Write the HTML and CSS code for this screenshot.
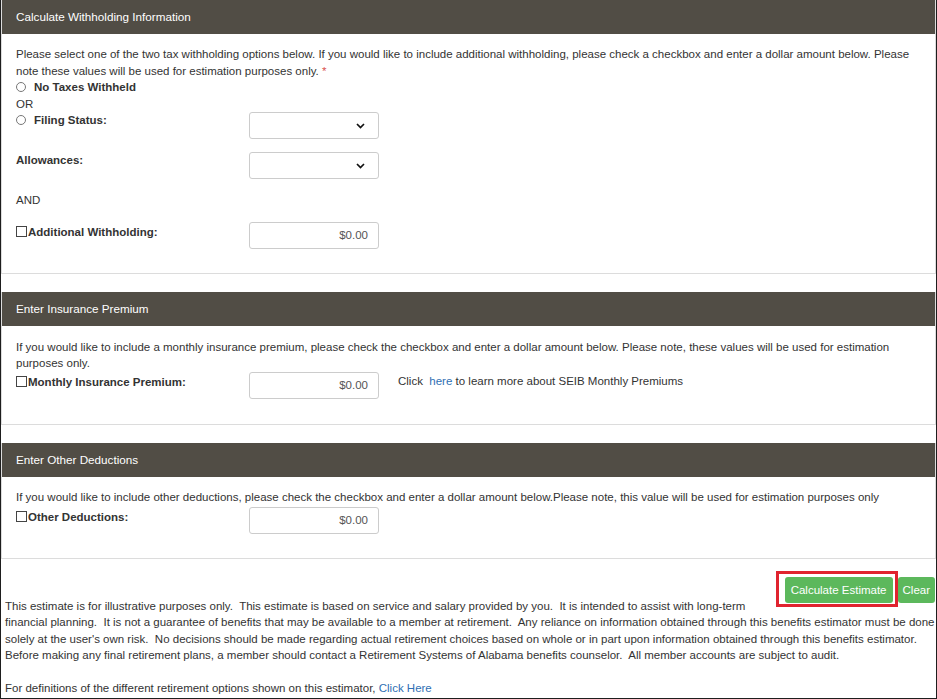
FILE: index.html
```html
<!DOCTYPE html>
<html lang="en">
<head>
    <meta charset="UTF-8">
    <meta name="viewport" content="width=device-width, initial-scale=1.0">
    <title>Benefits Estimator</title>
    <link rel="stylesheet" href="styles.css">
</head>
<body>
    <div class="frame">
        <div class="panel">
            <div class="panel-heading">Calculate Withholding Information</div>
            <div class="panel-body">
                <p class="intro">Please select one of the two tax withholding options below. If you would like to include additional withholding, please check a checkbox and enter a dollar amount below. Please note these values will be used for estimation purposes only. <span class="req">*</span></p>
                <div class="opt"><span class="radio"></span><b>No Taxes Withheld</b></div>
                <div class="plain">OR</div>
                <div class="row">
                    <div class="lbl"><span class="radio"></span><b>Filing Status:</b></div>
                    <div class="field select">
                        <svg width="9" height="6" viewBox="0 0 9 6"><polyline points="1,1 4.5,4.5 8,1" fill="none" stroke="#111" stroke-width="1.7"/></svg>
                    </div>
                </div>
                <div class="row gap">
                    <div class="lbl"><b>Allowances:</b></div>
                    <div class="field select">
                        <svg width="9" height="6" viewBox="0 0 9 6"><polyline points="1,1 4.5,4.5 8,1" fill="none" stroke="#111" stroke-width="1.7"/></svg>
                    </div>
                </div>
                <div class="plain gap">AND</div>
                <div class="row gap">
                    <div class="lbl pad"><span class="check"></span><b>Additional Withholding:</b></div>
                    <div class="field money">$0.00</div>
                </div>
            </div>
        </div>

        <div class="panel">
            <div class="panel-heading">Enter Insurance Premium</div>
            <div class="panel-body b2">
                <p>If you would like to include a monthly insurance premium, please check the checkbox and enter a dollar amount below. Please note, these values will be used for estimation purposes only.</p>
                <div class="row">
                    <div class="lbl pad"><span class="check"></span><b>Monthly Insurance Premium:</b></div>
                    <div class="field money">$0.00</div>
                    <div class="more">Click &nbsp;<a href="#">here</a> to learn more about SEIB Monthly Premiums</div>
                </div>
            </div>
        </div>

        <div class="panel panel-last">
            <div class="panel-heading">Enter Other Deductions</div>
            <div class="panel-body b3">
                <p>If you would like to include other deductions, please check the checkbox and enter a dollar amount below.Please note, this value will be used for estimation purposes only</p>
                <div class="row">
                    <div class="lbl pad"><span class="check"></span><b>Other Deductions:</b></div>
                    <div class="field money">$0.00</div>
                </div>
            </div>
        </div>

        <div class="footer">
            <div class="actions">
                <span class="highlight"><button class="btn">Calculate Estimate</button></span>
                <button class="btn clear">Clear</button>
            </div>
            <p class="disclaimer">This estimate is for illustrative purposes only.&nbsp; This estimate is based on service and salary provided by you.&nbsp; It is intended to assist with long-term financial planning.&nbsp; It is not a guarantee of benefits that may be available to a member at retirement.&nbsp; Any reliance on information obtained through this benefits estimator must be done solely at the user's own risk.&nbsp; No decisions should be made regarding actual retirement choices based on whole or in part upon information obtained through this benefits estimator.<br>Before making any final retirement plans, a member should contact a Retirement Systems of Alabama benefits counselor.&nbsp; All member accounts are subject to audit.</p>
            <p class="defs">For definitions of the different retirement options shown on this estimator, <a href="#">Click Here</a></p>
        </div>
    </div>
</body>
</html>
```

FILE: styles.css
```css
* {
    margin: 0;
    padding: 0;
    box-sizing: border-box;
}
body {
    background: #fff;
    font-family: "Liberation Sans", Arial, sans-serif;
    font-size: 11.5px;
    line-height: 16.5px;
    color: #333;
}
a {
    color: #2f6fb4;
    text-decoration: none;
}
.frame {
    width: 937px;
    height: 699px;
    border: 1px solid #1e1e1e;
    border-top: 0;
    overflow: hidden;
}
.panel {
    border: 1px solid #dcdcdc;
    border-top: 0;
    margin-bottom: 18px;
}
.panel-last {
    margin-bottom: 12px;
}
.panel-heading {
    height: 34px;
    line-height: 34px;
    padding: 0 14px;
    background: #514d45;
    color: #fff;
    font-size: 11.7px;
}
.panel-body {
    padding: 12px 14px 24px;
}
.b2 {
    padding-top: 13px;
    padding-bottom: 25px;
}
.b3 .row {
    margin-top: 1.5px;
}
.req {
    color: #d9534f;
}
.opt, .lbl {
    display: flex;
    align-items: center;
}
.radio {
    display: inline-block;
    width: 10px;
    height: 10px;
    margin: 0 8px 0 0;
    border: 1px solid #777;
    border-radius: 50%;
    background: #fff;
}
.check {
    display: inline-block;
    width: 11px;
    height: 11px;
    margin-right: 1px;
    border: 1px solid #444;
    background: #fff;
}
.row {
    display: flex;
    align-items: flex-start;
}
.gap {
    margin-top: 13px;
}
.lbl {
    width: 233px;
    flex-shrink: 0;
}
.lbl.pad {
    padding-top: 2px;
}
.field {
    width: 130px;
    height: 27px;
    border: 1px solid #ccc;
    border-radius: 3px;
    background: #fff;
}
.select {
    display: flex;
    align-items: center;
    justify-content: flex-end;
    padding-right: 13px;
}
.money {
    text-align: right;
    padding-right: 10px;
    line-height: 25px;
    color: #555;
}
.more {
    margin-left: 19px;
    padding-top: 1px;
}
.footer {
    padding-left: 4px;
}
.actions {
    float: right;
    display: flex;
    align-items: flex-start;
    margin-right: 1px;
}
.highlight {
    display: inline-block;
    border: 3px solid #e0232f;
    padding: 3px 2px 1px 6px;
}
.btn {
    height: 26px;
    padding: 0 6px;
    border: 0;
    border-radius: 3px;
    background: #5cb85c;
    color: #fff;
    font-family: "Liberation Sans", Arial, sans-serif;
    font-size: 11.5px;
}
.clear {
    margin-top: 6px;
    padding: 0 5px;
}
.disclaimer {
    padding-top: 27px;
}
.defs {
    margin-top: 16.5px;
}
```
